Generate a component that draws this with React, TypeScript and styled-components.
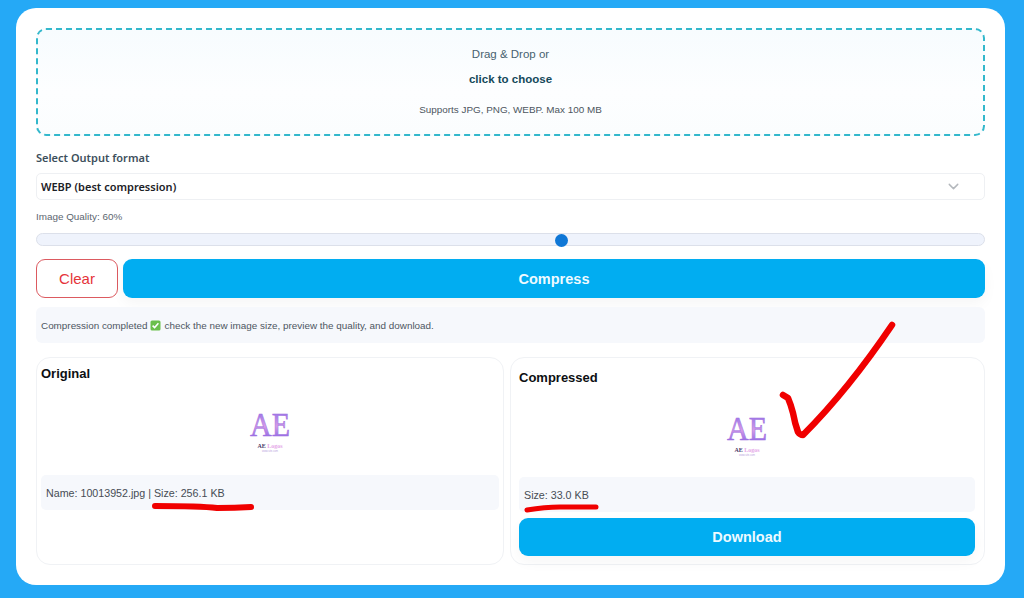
import React from 'react'
import styled, { createGlobalStyle } from 'styled-components'
import { ChevronDown } from 'lucide-react'

const Global = createGlobalStyle`
  html, body {
    margin: 0;
    padding: 0;
    background: #25a9f6;
    font-family: "Liberation Sans", Arial, sans-serif;
  }
  * { box-sizing: border-box; }
`

const Page = styled.div`
  position: relative;
  width: 1024px;
  height: 598px;
  padding: 8px 19px 13px 16px;
  overflow: hidden;
`

const Card = styled.main`
  height: 577px;
  background: #fff;
  border-radius: 20px;
  padding: 20px;
  display: flex;
  flex-direction: column;
`

const DropZone = styled.div`
  height: 109px;
  border: 2px dashed #33b8cc;
  border-radius: 10px;
  background: linear-gradient(#f7fcfe, #fdfeff 60%, #fbfdfe);
  display: flex;
  flex-direction: column;
  align-items: center;
  padding-top: 17px;
`

const DropText = styled.div`
  font-size: 11.5px;
  line-height: 14px;
  color: #47626f;
`

const DropLink = styled.div`
  font-size: 11.5px;
  line-height: 14px;
  font-weight: bold;
  color: #14495a;
  margin-top: 11px;
`

const DropHint = styled.div`
  font-size: 9.9px;
  line-height: 12px;
  color: #4c5560;
  margin-top: 18px;
`

const FieldLabel = styled.label`
  font-family: "Noto Sans", sans-serif;
  font-size: 11px;
  line-height: 14px;
  font-weight: 600;
  color: #3d4f5c;
  margin-top: 15px;
`

const Select = styled.div`
  height: 27px;
  margin-top: 8px;
  border: 1px solid #eef0f3;
  border-radius: 5px;
  display: flex;
  align-items: center;
  justify-content: space-between;
  padding: 1px 22px 0 4px;
  font-family: "Noto Sans", sans-serif;
  font-size: 11px;
  font-weight: 600;
  color: #1c2126;
  background: #fff;
`

const QualityLabel = styled.div`
  font-size: 9.9px;
  line-height: 12px;
  color: #5c6670;
  margin-top: 11px;
`

const Slider = styled.div`
  position: relative;
  height: 14px;
  margin-top: 10px;
  border: 1px solid #dce0ea;
  border-radius: 7px;
  background: #eff3fc;
`

const Thumb = styled.span`
  position: absolute;
  top: 0;
  width: 13px;
  height: 13px;
  border-radius: 50%;
  background: #0f77d6;
`

const Actions = styled.div`
  display: flex;
  gap: 5px;
  margin-top: ${(p: { $gap: number }) => p.$gap}px;
`

const ClearButton = styled.button`
  width: 82px;
  height: 39px;
  border: 1px solid #dc5a60;
  border-radius: 9px;
  background: #fff;
  color: #e5343a;
  font: 15px "Liberation Sans", Arial, sans-serif;
`

const PrimaryButton = styled.button`
  flex: 1;
  height: ${(p: { $h: number }) => p.$h}px;
  border: 0;
  border-radius: 9px;
  background: #01adf1;
  color: #eefaff;
  font: bold 14.5px "Liberation Sans", Arial, sans-serif;
  box-shadow: 0 6px 14px rgba(0, 0, 0, 0.04);
`

const Status = styled.div`
  height: 36px;
  margin-top: 9px;
  border-radius: 6px;
  background: #f6f8fc;
  display: flex;
  align-items: center;
  gap: 3px;
  padding-left: 5px;
  font-size: 9.9px;
  color: #4d5661;
`

const Panels = styled.div`
  display: flex;
  gap: 6px;
  margin-top: 14px;
`

const Panel = styled.section<{ $top: number; $w: number; $left: number; $right: number }>`
  height: 208px;
  border: 1px solid #f0f2f5;
  border-radius: 14px;
  padding: ${(p) => p.$top}px ${(p) => p.$right}px 8px ${(p) => p.$left}px;
  width: ${(p) => p.$w}px;
  display: flex;
  flex-direction: column;
`

const PanelTitle = styled.h3`
  margin: 0;
  font-size: 13px;
  line-height: 15px;
  font-weight: bold;
  color: #0d0f12;
`

const LogoSlot = styled.div<{ $h: number }>`
  height: ${(p) => p.$h}px;
  display: flex;
  justify-content: center;
  align-items: flex-start;
  padding-top: 19px;
`

const Info = styled.div`
  height: 35px;
  flex: none;
  border-radius: 5px;
  background: #f6f8fc;
  display: flex;
  align-items: center;
  padding-left: 5px;
  font-size: 10.7px;
  color: #464c54;
`

const Marks = styled.svg`
  position: absolute;
  left: 0;
  top: 0;
  pointer-events: none;
`

function Logo({ id }: { id: string }) {
  return (
    <svg width="56" height="60" viewBox="0 0 56 60">
      <defs>
        <linearGradient id={id} x1="0" y1="0" x2="0" y2="1">
          <stop offset="0.25" stopColor="#a67ce8" />
          <stop offset="0.55" stopColor="#d79be8" />
          <stop offset="0.8" stopColor="#9d72e6" />
        </linearGradient>
      </defs>
      <text
        x="28"
        y="30"
        textAnchor="middle"
        fontFamily="Liberation Serif, serif"
        fontSize="30"
        fill={`url(#${id})`}
        stroke="#9c6fe0"
        strokeWidth="0.5"
        transform="translate(0 36) scale(1 1.15) translate(0 -30)"
      >
        AE
      </text>
      <text x="28" y="47.5" textAnchor="middle" fontFamily="Liberation Serif, serif" fontSize="6" fontWeight="bold" fill="#4a3a6a">
        AE <tspan fill="#e5a6e8">Logos</tspan>
      </text>
      <text x="28" y="52" textAnchor="middle" fontFamily="Liberation Sans, sans-serif" fontSize="2.6" fill="#b9a5dd">
        www.site.com
      </text>
    </svg>
  )
}

function CheckEmoji() {
  return (
    <svg width="11" height="11" viewBox="0 0 11 11">
      <rect width="10" height="10" x="0.5" y="0.5" rx="1.5" fill="#6bbf4b" />
      <path d="M2.6 5.6l2 2 3.8-4.4" fill="none" stroke="#fff" strokeWidth="1.5" />
    </svg>
  )
}

export default function App() {
  return (
    <Page>
      <Global />
      <Card>
        <DropZone>
          <DropText>Drag &amp; Drop or</DropText>
          <DropLink>click to choose</DropLink>
          <DropHint>Supports JPG, PNG, WEBP. Max 100 MB</DropHint>
        </DropZone>
        <FieldLabel>Select Output format</FieldLabel>
        <Select>
          WEBP (best compression)
          <ChevronDown size={17} color="#b4b8bd" strokeWidth={2} />
        </Select>
        <QualityLabel>Image Quality: 60%</QualityLabel>
        <Slider>
          <Thumb style={{ left: `${(519 / 949) * 100}%` }} />
        </Slider>
        <Actions $gap={13}>
          <ClearButton>Clear</ClearButton>
          <PrimaryButton $h={39}>Compress</PrimaryButton>
        </Actions>
        <Status>
          Compression completed <CheckEmoji /> check the new image size, preview the quality, and download.
        </Status>
        <Panels>
          <Panel $top={8} $w={468} $left={4} $right={4}>
            <PanelTitle>Original</PanelTitle>
            <LogoSlot $h={94}>
              <Logo id="ae-left" />
            </LogoSlot>
            <Info>Name: 10013952.jpg | Size: 256.1 KB</Info>
          </Panel>
          <Panel $top={12} $w={475} $left={8} $right={9}>
            <PanelTitle>Compressed</PanelTitle>
            <LogoSlot $h={95}>
              <Logo id="ae-right" />
            </LogoSlot>
            <Info>Size: 33.0 KB</Info>
            <Actions $gap={6}>
              <PrimaryButton $h={38}>Download</PrimaryButton>
            </Actions>
          </Panel>
        </Panels>
      </Card>
      <Marks width="1024" height="598" viewBox="0 0 1024 598">
        <g fill="none" stroke="#f00000" strokeLinecap="round" strokeLinejoin="round">
          <path d="M155 506Q200 506 217 508Q235 508 251 507" strokeWidth="6" />
          <path d="M527 510Q545 507 560 507L596 507" strokeWidth="5" />
          <path d="M783 395L788 398Q791 405 793 413Q795 424 798 432Q800 435 803 435Q848 390 892 325" strokeWidth="6.5" />
        </g>
      </Marks>
    </Page>
  )
}
